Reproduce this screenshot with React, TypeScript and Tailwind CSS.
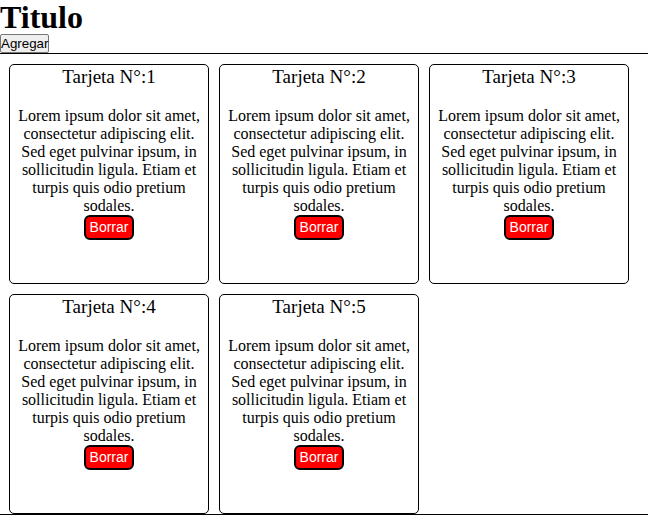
import React, { useState } from "react";

const lorem =
  "Lorem ipsum dolor sit amet, consectetur adipiscing elit. Sed eget pulvinar ipsum, in sollicitudin ligula. Etiam et turpis quis odio pretium sodales.";

function Tarjeta({ n, onBorrar }: { n: number; onBorrar: () => void }) {
  return (
    <div className="w-[200px] h-[220px] border border-black rounded-[5px] px-[8px] text-center text-black">
      <h3 className="text-[19px] leading-[23px] font-normal">Tarjeta N°:{n}</h3>
      <p className="mt-[19px] text-[16px] leading-[18px]">{lorem}</p>
      <button
        onClick={onBorrar}
        className="block mx-auto h-[25px] px-[4px] bg-[#ff0000] text-white border-2 border-black rounded-[6px] text-[14px] font-['Liberation_Sans',Arial,sans-serif]"
      >
        Borrar
      </button>
    </div>
  );
}

export default function App() {
  const [cards, setCards] = useState([1, 2, 3, 4, 5]);

  return (
    <div className="font-['Liberation_Serif','Times_New_Roman',serif] text-black bg-white">
      <h1 className="text-[32px] leading-[34px] font-bold">Titulo</h1>
      <button
        onClick={() => setCards([...cards, cards.length + 1])}
        className="block h-[19px] px-0 bg-[#efefef] border border-[#767676] rounded-[2px] text-[13.33px] leading-[15px] font-['Liberation_Sans',Arial,sans-serif]"
      >
        Agregar
      </button>
      <div className="border-t border-b border-black pl-[9px] pt-[10px] flex flex-wrap gap-[10px]">
        {cards.map((n) => (
          <Tarjeta key={n} n={n} onBorrar={() => setCards(cards.filter((c) => c !== n))} />
        ))}
      </div>
    </div>
  );
}
